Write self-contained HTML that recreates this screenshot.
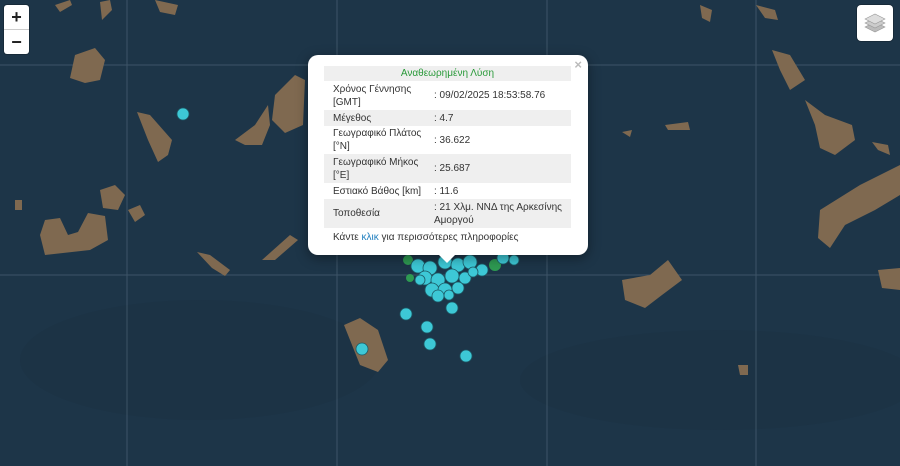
<!DOCTYPE html>
<html><head><meta charset="utf-8"><style>
body{margin:0;width:900px;height:466px;overflow:hidden;background:#1c3447;font-family:"Liberation Sans",sans-serif}
#map{position:absolute;left:0;top:0}
.zoom{position:absolute;left:4px;top:5px;width:25px;height:49px;background:#fff;border-radius:3px;box-shadow:0 0 0 1px rgba(0,0,0,.2)}
.zoom div{height:24px;text-align:center;font:bold 18px/24px "Liberation Sans",sans-serif;color:#222}
.zoom div:first-child{border-bottom:1px solid #ccc}
.layers{position:absolute;left:857px;top:5px;width:36px;height:36px;background:#fff;border-radius:4px;box-shadow:0 0 0 1px rgba(0,0,0,.2)}
.pop{position:absolute;left:308px;top:55px;width:280px;height:200px;background:#fff;border-radius:10px;box-shadow:0 3px 12px rgba(0,0,0,.4)}
.tip{position:absolute;left:438px;top:254px;width:0;height:0;border-left:9px solid transparent;border-right:9px solid transparent;border-top:9px solid #fff}
.x{position:absolute;right:6px;top:2px;color:#bbb;font:bold 13px "Liberation Sans",sans-serif}
table{position:absolute;left:16px;top:11px;width:247px;border-collapse:collapse;font-size:10px;color:#333;table-layout:fixed}
td{padding:0 0 0 9px;line-height:13px;vertical-align:middle;white-space:nowrap}
tr.g td{background:#efefef}
td.v{padding-left:1px}
.f{position:absolute;left:25px;top:177px;font-size:10px;color:#333;white-space:nowrap}
</style></head><body>
<svg id="map" width="900" height="466">
<rect width="900" height="466" fill="#1d3548"/>
<g fill="#1a2f40" opacity=".3"><ellipse cx="200" cy="360" rx="180" ry="60"/><ellipse cx="720" cy="380" rx="200" ry="50"/></g>
<g stroke="#6d8396" stroke-width="1" opacity=".4"><line x1="0" y1="65" x2="900" y2="65"/><line x1="0" y1="275" x2="900" y2="275"/><line x1="127" y1="0" x2="127" y2="466"/><line x1="337" y1="0" x2="337" y2="466"/><line x1="547" y1="0" x2="547" y2="466"/><line x1="756" y1="0" x2="756" y2="466"/></g>
<g fill="#7f6950">
<path d="M55 5 L70 0 L72 5 L60 12Z"/>
<path d="M75 55 L95 48 L105 60 L100 80 L85 83 L70 78Z"/>
<path d="M137 112 L150 115 L172 140 L168 155 L158 162 L148 140Z"/>
<path d="M235 140 L255 125 L268 105 L270 125 L262 145 L245 145Z"/>
<path d="M275 95 L295 75 L305 80 L303 125 L285 133 L272 120Z"/>
<path d="M100 190 L115 185 L125 195 L118 210 L103 208Z"/>
<path d="M128 210 L140 205 L145 215 L135 222Z"/>
<path d="M45 220 L60 218 L68 235 L78 232 L88 213 L105 216 L108 240 L90 250 L45 255 L40 235Z"/>
<path d="M15 200 L22 200 L22 210 L15 210Z"/>
<path d="M197 252 L210 255 L230 270 L225 276 L212 268Z"/>
<path d="M262 260 L290 235 L298 240 L275 260Z"/>
<path d="M100 2 L110 0 L112 10 L102 20Z"/>
<path d="M155 0 L178 5 L175 15 L160 12Z"/>
<path d="M700 5 L712 10 L710 22 L702 18Z"/>
<path d="M756 5 L775 10 L778 20 L765 18Z"/>
<path d="M772 50 L790 55 L805 80 L790 90 L780 70Z"/>
<path d="M805 100 L825 115 L852 125 L855 140 L835 155 L820 148 L815 125Z"/>
<path d="M872 142 L888 145 L890 155 L878 150Z"/>
<path d="M820 210 L860 185 L900 165 L900 195 L875 210 L845 225 L830 248 L818 238Z"/>
<path d="M878 270 L900 268 L900 290 L882 288Z"/>
<path d="M622 280 L650 275 L668 260 L682 280 L662 295 L645 308 L625 300Z"/>
<path d="M665 125 L688 122 L690 130 L668 130Z"/>
<path d="M622 132 L632 130 L630 137Z"/>
<path d="M738 365 L748 365 L748 375 L740 375Z"/>
<path d="M344 325 L360 318 L378 330 L388 360 L378 372 L360 365 L352 345Z"/>
</g>
<g fill="#3dc8d6" stroke="#1d5a66" stroke-width=".8">
<circle cx="183" cy="114" r="6"/>
<circle cx="406" cy="314" r="6"/><circle cx="452" cy="308" r="6"/><circle cx="427" cy="327" r="6"/><circle cx="430" cy="344" r="6"/><circle cx="362" cy="349" r="6"/><circle cx="466" cy="356" r="6"/>
</g>
<g fill="#2e9a52"><circle cx="408" cy="260" r="5"/><circle cx="495" cy="265" r="6"/><circle cx="410" cy="278" r="4"/></g>
<g fill="#3dc8d6" stroke="#1d5a66" stroke-width=".8">
<circle cx="418" cy="266" r="7"/><circle cx="430" cy="268" r="7"/><circle cx="445" cy="262" r="7"/><circle cx="458" cy="265" r="7"/><circle cx="470" cy="262" r="7"/><circle cx="482" cy="270" r="6"/><circle cx="503" cy="258" r="6"/><circle cx="514" cy="260" r="5"/>
<circle cx="425" cy="278" r="7"/><circle cx="438" cy="280" r="7"/><circle cx="452" cy="276" r="7"/><circle cx="465" cy="278" r="6"/><circle cx="432" cy="290" r="7"/><circle cx="445" cy="290" r="7"/><circle cx="458" cy="288" r="6"/><circle cx="438" cy="296" r="6"/><circle cx="449" cy="295" r="5"/><circle cx="420" cy="280" r="5"/><circle cx="473" cy="272" r="5"/>
</g>
</svg>
<div class="zoom"><div>+</div><div>−</div></div>
<div class="layers"><svg width="36" height="36"><g fill="#bbb" stroke="#999" stroke-width=".6"><path d="M8 22 L18 17 L28 22 L18 27Z"/><path d="M8 18 L18 13 L28 18 L18 23Z" fill="#ccc"/><path d="M8 14 L18 9 L28 14 L18 19Z" fill="#ddd"/></g></svg></div>
<div class="pop">
<div class="x">×</div>
<table>
<colgroup><col style="width:109px"><col style="width:138px"></colgroup>
<tr class="g"><td colspan="2" style="text-align:center;color:#2a9a3a;height:15px;padding:0">Αναθεωρημένη Λύση</td></tr>
<tr><td style="height:29px">Χρόνος Γέννησης<br>[GMT]</td><td class="v">: 09/02/2025 18:53:58.76</td></tr>
<tr class="g"><td style="height:16px">Μέγεθος</td><td class="v">: 4.7</td></tr>
<tr><td style="height:28px">Γεωγραφικό Πλάτος<br>[°N]</td><td class="v">: 36.622</td></tr>
<tr class="g"><td style="height:29px">Γεωγραφικό Μήκος<br>[°E]</td><td class="v">: 25.687</td></tr>
<tr><td style="height:16px">Εστιακό Βάθος [km]</td><td class="v">: 11.6</td></tr>
<tr class="g"><td style="height:29px">Τοποθεσία</td><td class="v">: 21 Χλμ. ΝΝΔ της Αρκεσίνης<br>Αμοργού</td></tr>
</table>
<div class="f">Κάντε <span style="color:#1f7fbf">κλικ</span> για περισσότερες πληροφορίες</div>
</div>
<div class="tip"></div>
</body></html>
